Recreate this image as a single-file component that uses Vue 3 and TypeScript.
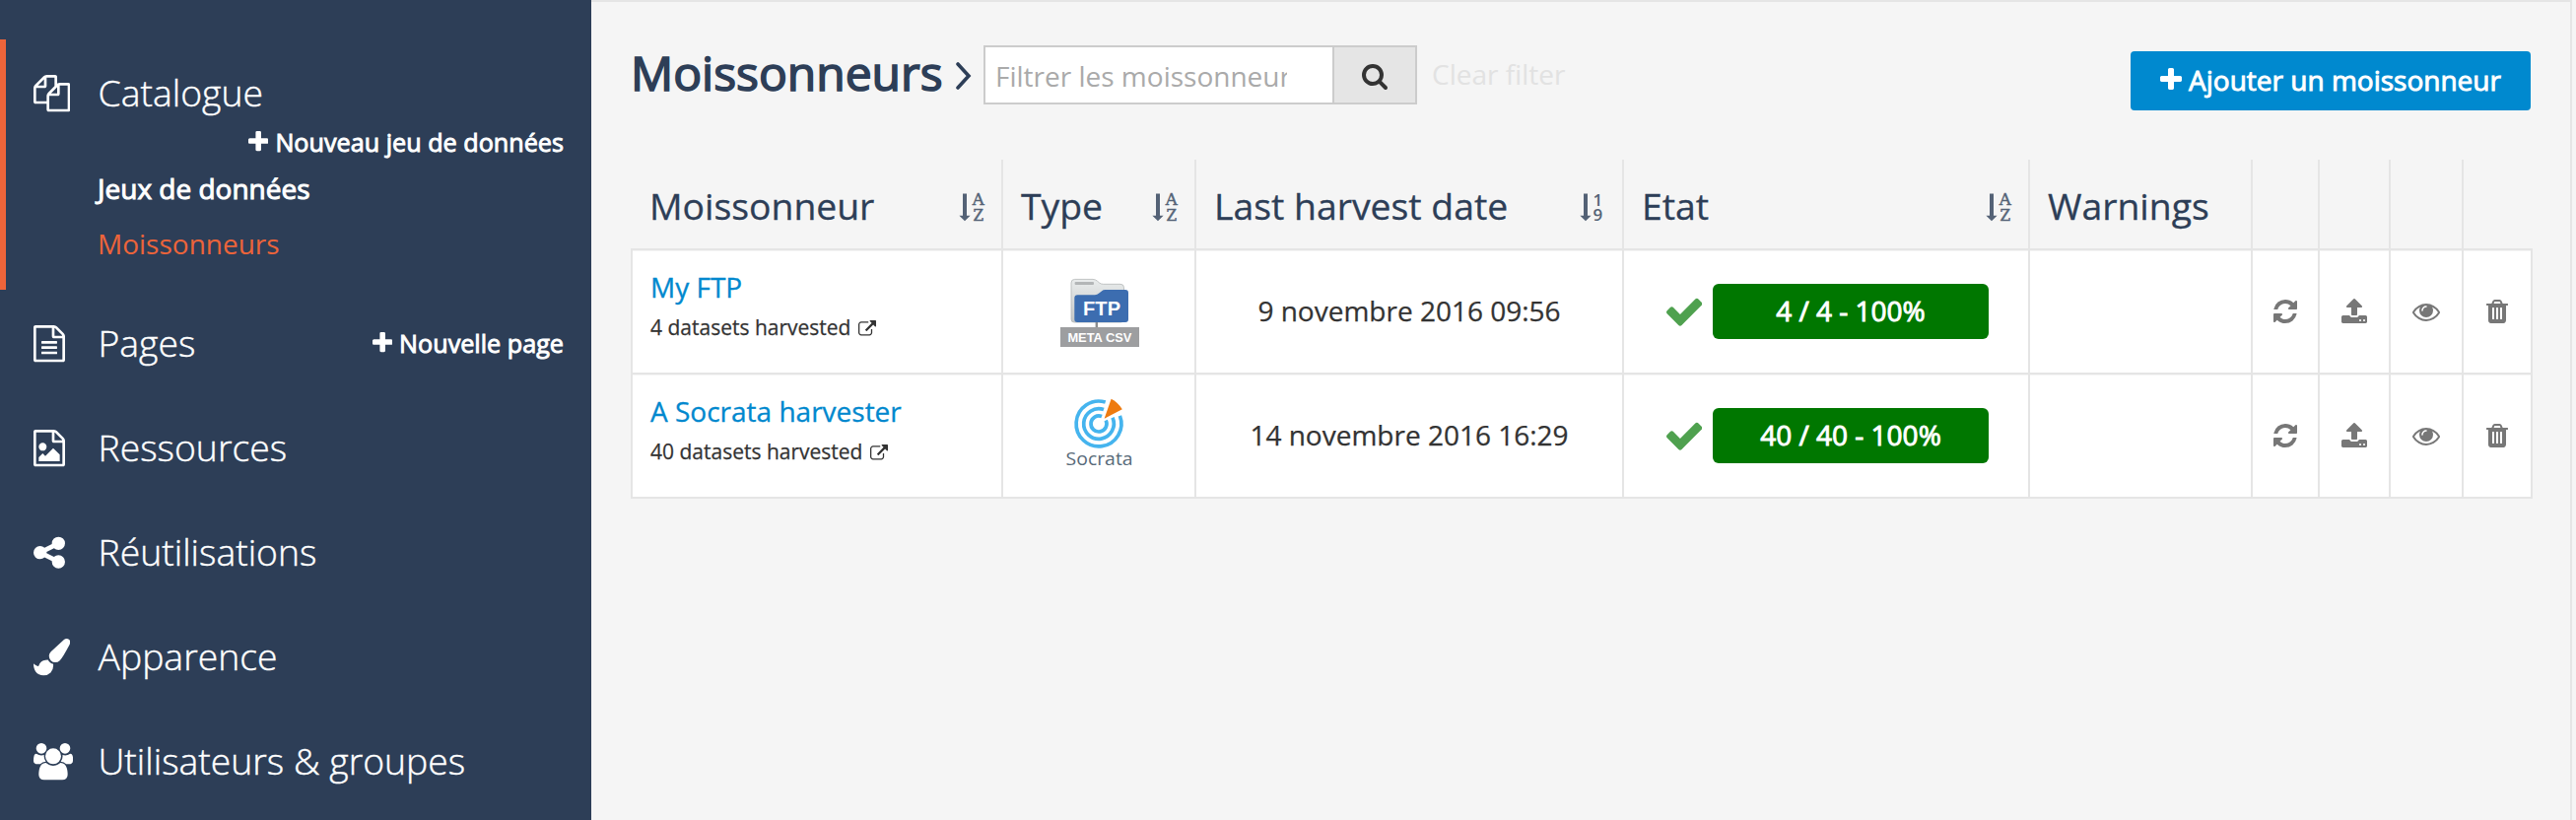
<script setup lang="ts">
interface Glyph { box: string; w: number; h: number; d: string }
interface NavItem { label: string; icon: string; action?: string; cls: string }
interface Harvester { name: string; count: number; kind: 'ftp' | 'socrata'; date: string; state: string }

const plusD = 'M1600 736v192q0 40-28 68t-68 28h-416v416q0 40-28 68t-68 28h-192q-40 0-68-28t-28-68v-416h-416q-40 0-68-28t-28-68v-192q0-40 28-68t68-28h416v-416q0-40 28-68t68-28h192q40 0 68 28t28 68v416h416q40 0 68 28t28 68z'
const pageD = 'M1596 380q28 28 48 76t20 88v1152q0 40-28 68t-68 28h-1344q-40 0-68-28t-28-68v-1600q0-40 28-68t68-28h896q40 0 88 20t76 48zm-444-244v376h376q-10-29-22-41l-313-313q-12-12-41-22zm384 1528v-1024h-416q-40 0-68-28t-28-68v-416h-768v1536h1280z'
const trashBar = 'v-704q0-14-9-23t-23-9h-64q-14 0-23 9t-9 23v704q0 14 9 23t23 9h64q14 0 23-9t9-23z'

const glyphs: Record<string, Glyph> = {
  plus: { box: '192 0 1408 1792', w: 1408, h: 1792, d: plusD },
  search: { box: '64 0 1664 1792', w: 1664, h: 1792, d: 'M1216 832q0-185-131.5-316.5t-316.5-131.5-316.5 131.5-131.5 316.5 131.5 316.5 316.5 131.5 316.5-131.5 131.5-316.5zm512 832q0 52-38 90t-90 38q-54 0-90-38l-343-342q-179 124-399 124-143 0-273.5-55.5t-225-150-150-225-55.5-273.5 55.5-273.5 150-225 225-150 273.5-55.5 273.5 55.5 225 150 150 225 55.5 273.5q0 220-124 399l343 343q37 37 37 90z' },
  files: { box: '0 0 1792 1792', w: 1792, h: 1792, d: 'M1696 384q40 0 68 28t28 68v1216q0 40-28 68t-68 28h-960q-40 0-68-28t-28-68v-288h-544q-40 0-68-28t-28-68v-672q0-40 20-88t48-76l408-408q28-28 76-48t88-20h416q40 0 68 28t28 68v328q68-40 128-40h416zm-544 213l-299 299h299v-299zm-640-384l-299 299h299v-299zm196 647l316-316v-416h-384v416q0 40-28 68t-68 28h-416v640h512v-256q0-40 20-88t48-76zm956 804v-1152h-384v416q0 40-28 68t-68 28h-416v640h896z' },
  page: { box: '128 0 1536 1792', w: 1536, h: 1792, d: pageD + 'M512 800q0-14 9-23t23-9h704q14 0 23 9t9 23v64q0 14-9 23t-23 9h-704q-14 0-23-9t-9-23v-64zm736 224q14 0 23 9t9 23v64q0 14-9 23t-23 9h-704q-14 0-23-9t-9-23v-64q0-14 9-23t23-9h704zm0 256q14 0 23 9t9 23v64q0 14-9 23t-23 9h-704q-14 0-23-9t-9-23v-64q0-14 9-23t23-9h704z' },
  image: { box: '128 0 1536 1792', w: 1536, h: 1792, d: pageD + 'M1408 1216v320h-1024v-192l192-192 128 128 384-384zm-832-192q-80 0-136-56t-56-136 56-136 136-56 136 56 56 136-56 136-136 56z' },
  share: { box: '128 0 1536 1792', w: 1536, h: 1792, d: 'M1344 1024q133 0 226.5 93.5t93.5 226.5-93.5 226.5-226.5 93.5-226.5-93.5-93.5-226.5q0-12 2-34l-360-180q-92 86-218 86-133 0-226.5-93.5t-93.5-226.5 93.5-226.5 226.5-93.5q126 0 218 86l360-180q-2-22-2-34 0-133 93.5-226.5t226.5-93.5 226.5 93.5 93.5 226.5-93.5 226.5-226.5 93.5q-126 0-218-86l-360 180q2 22 2 34t-2 34l360 180q92-86 218-86z' },
  brush: { box: '0 0 1792 1792', w: 1792, h: 1792, d: 'M1615 0q70 0 122.5 46.5t52.5 116.5q0 63-45 151-332 629-465 752-97 91-218 91-126 0-216.5-92.5t-90.5-219.5q0-128 92-212l638-579q59-54 130-54zm-909 1034q39 76 106.5 130t150.5 76l1 71q4 213-129.5 347t-348.5 134q-123 0-218-46.5t-152.5-127.5-86.5-183-29-220q7 5 41 30t62 44.5 59 36.5 46 17q41 0 55-37 25-66 57.5-112.5t69.5-76 88-47.5 103-25.5 125-10.5z' },
  users: { box: '0 0 1920 1792', w: 1920, h: 1792, d: 'M593 896q-162 5-265 128h-134q-82 0-138-40.5t-56-118.5q0-353 124-353 6 0 43.5 21t97.5 42.5 119 21.5q67 0 133-23-5 37-5 66 0 159 93 256zm1071 637q0 120-73 189.5t-194 69.5h-874q-121 0-194-69.5t-73-189.5q0-53 3.5-103.5t14-109 26.5-108.5 43-97.5 62-81 85.5-53.5 111.5-20q10 0 43 21.5t73 48 107 48 135 21.5 135-21.5 107-48 73-48 43-21.5q61 0 111.5 20t85.5 53.5 62 81 43 97.5 26.5 108.5 14 109 3.5 103.5zm-1024-1277q0 106-75 181t-181 75-181-75-75-181 75-181 181-75 181 75 75 181zm704 384q0 159-112.5 271.5t-271.5 112.5-271.5-112.5-112.5-271.5 112.5-271.5 271.5-112.5 271.5 112.5 112.5 271.5zm576 225q0 78-56 118.5t-138 40.5h-134q-103-123-265-128 93-97 93-256 0-29-5-66 66 23 133 23 59 0 119-21.5t97.5-42.5 43.5-21q124 0 124 353zm-128-609q0 106-75 181t-181 75-181-75-75-181 75-181 181-75 181 75 75 181z' },
  refresh: { box: '128 0 1536 1792', w: 1536, h: 1792, d: 'M1639 1056q0 5-1 7-64 268-268 434.5t-478 166.5q-146 0-282.5-55t-243.5-157l-129 129q-19 19-45 19t-45-19-19-45v-448q0-26 19-45t45-19h448q26 0 45 19t19 45-19 45l-137 137q71 66 161 102t187 36q134 0 250-65t186-179q11-17 53-117 8-23 30-23h192q13 0 22.5 9.5t9.5 22.5zm25-800v448q0 26-19 45t-45 19h-448q-26 0-45-19t-19-45 19-45l138-138q-148-137-349-137-134 0-250 65t-186 179q-11 17-53 117-8 23-30 23h-199q-13 0-22.5-9.5t-9.5-22.5v-7q65-268 270-434.5t480-166.5q146 0 284 55.5t245 156.5l130-129q19-19 45-19t45 19 19 45z' },
  upload: { box: '64 0 1664 1792', w: 1664, h: 1792, d: 'M1344 1472q0-26-19-45t-45-19-45 19-19 45 19 45 45 19 45-19 19-45zm256 0q0-26-19-45t-45-19-45 19-19 45 19 45 45 19 45-19 19-45zm128-224v320q0 40-28 68t-68 28h-1472q-40 0-68-28t-28-68v-320q0-40 28-68t68-28h427q21 56 70.5 92t110.5 36h256q61 0 110.5-36t70.5-92h427q40 0 68 28t28 68zm-325-648q-17 40-59 40h-256v448q0 26-19 45t-45 19h-256q-26 0-45-19t-19-45v-448h-256q-42 0-59-40-17-39 14-69l448-448q18-19 45-19t45 19l448 448q31 30 14 69z' },
  eye: { box: '0 0 1792 1792', w: 1792, h: 1792, d: 'M1664 960q-152-236-381-353 61 104 61 225 0 185-131.5 316.5t-316.5 131.5-316.5-131.5-131.5-316.5q0-121 61-225-229 117-381 353 133 205 333.5 326.5t434.5 121.5 434.5-121.5 333.5-326.5zm-720-384q0-20-14-34t-34-14q-125 0-214.5 89.5t-89.5 214.5q0 20 14 34t34 14 34-14 14-34q0-86 61-147t147-61q20 0 34-14t14-34zm848 384q0 34-20 69-140 230-376.5 368.5t-499.5 138.5-499.5-139-376.5-368q-20-35-20-69t20-69q140-229 376.5-368t499.5-139 499.5 139 376.5 368q20 35 20 69z' },
  trash: { box: '192 0 1408 1792', w: 1408, h: 1792, d: `M704 1376${trashBar}M960 1376${trashBar}M1216 1376${trashBar}` + 'M672 384h448l-48-117q-7-9-17-11h-317q-10 2-17 11zm928 32v64q0 14-9 23t-23 9h-96v948q0 83-47 143.5t-113 60.5h-832q-66 0-113-58.5t-47-141.5v-952h-96q-14 0-23-9t-9-23v-64q0-14 9-23t23-9h309l70-167q15-37 54-63t79-26h320q40 0 79 26t54 63l70 167h309q14 0 23 9t9 23z' },
  check: { box: '121 0 1550 1792', w: 1550, h: 1792, d: 'M1671 566q0 40-28 68l-724 724-136 136q-28 28-68 28t-68-28l-136-136-362-362q-28-28-28-68t28-68l136-136q28-28 68-28t68 28l294 295 656-657q28-28 68-28t68 28l136 136q28 28 28 68z' },
  external: { box: '0 0 1792 1792', w: 1792, h: 1792, d: 'M1408 928v320q0 119-84.5 203.5t-203.5 84.5h-832q-119 0-203.5-84.5t-84.5-203.5v-832q0-119 84.5-203.5t203.5-84.5h704q14 0 23 9t9 23v64q0 14-9 23t-23 9h-704q-66 0-113 47t-47 113v832q0 66 47 113t113 47h832q66 0 113-47t47-113v-320q0-14 9-23t23-9h64q14 0 23 9t9 23zm384-864v512q0 26-19 45t-45 19-45-19l-176-176-652 652q-10 10-23 10t-23-10l-114-114q-10-10-10-23t10-23l652-652-176-176q-19-19-19-45t19-45 45-19h512q26 0 45 19t19 45z' },
}

const nav: NavItem[] = [
  { label: 'Pages', icon: 'page', action: 'Nouvelle page', cls: 'n-pages' },
  { label: 'Ressources', icon: 'image', cls: 'n-res' },
  { label: 'Réutilisations', icon: 'share', cls: 'n-reu' },
  { label: 'Apparence', icon: 'brush', cls: 'n-app' },
  { label: 'Utilisateurs & groupes', icon: 'users', cls: 'n-usr' },
]

const columns: { label: string; sort?: [string, string] }[] = [
  { label: 'Moissonneur', sort: ['A', 'Z'] },
  { label: 'Type', sort: ['A', 'Z'] },
  { label: 'Last harvest date', sort: ['1', '9'] },
  { label: 'Etat', sort: ['A', 'Z'] },
  { label: 'Warnings' },
  { label: '' }, { label: '' }, { label: '' }, { label: '' },
]

const harvesters: Harvester[] = [
  { name: 'My FTP', count: 4, kind: 'ftp', date: '9 novembre 2016 09:56', state: '4 / 4 - 100%' },
  { name: 'A Socrata harvester', count: 40, kind: 'socrata', date: '14 novembre 2016 16:29', state: '40 / 40 - 100%' },
]

const actions = ['refresh', 'upload', 'eye', 'trash']

/* Open ring around (39, 28); the gap faces the upper right. */
function ring(r: number, from: number, to: number): string {
  const at = (deg: number) => {
    const a = (deg * Math.PI) / 180
    return `${(39 + r * Math.sin(a)).toFixed(2)} ${(28 - r * Math.cos(a)).toFixed(2)}`
  }
  return `M${at(from)}A${r} ${r} 0 1 1 ${at(to)}`
}
const rings = [ring(22.9, 69, 377), ring(15.3, 66, 379), ring(8, 64, 382)]
</script>

<template>
  <div class="screen">
    <aside class="sidebar">
      <section class="active-block">
        <div class="nav-head">
          <svg class="nav-icon" :viewBox="glyphs.files.box"><path :d="glyphs.files.d" /></svg>
          <span class="nav-label n-cat">Catalogue</span>
        </div>
        <div class="new-line">
          <svg class="mini-plus" :viewBox="glyphs.plus.box"><path :d="glyphs.plus.d" /></svg>
          <span class="new-text new-data">Nouveau jeu de données</span>
        </div>
        <div class="sub sub-data"><span>Jeux de données</span></div>
        <div class="sub sub-on"><span>Moissonneurs</span></div>
      </section>
      <div v-for="item in nav" :key="item.label" class="nav-row">
        <svg class="nav-icon" :viewBox="glyphs[item.icon].box"><path :d="glyphs[item.icon].d" /></svg>
        <span class="nav-label" :class="item.cls">{{ item.label }}</span>
        <div v-if="item.action" class="new-line side">
          <svg class="mini-plus" :viewBox="glyphs.plus.box"><path :d="glyphs.plus.d" /></svg>
          <span class="new-text new-page">{{ item.action }}</span>
        </div>
      </div>
    </aside>

    <main class="panel">
      <header class="topbar">
        <h1>Moissonneurs</h1>
        <svg class="angle" viewBox="0 0 16 28"><path d="M2 2L13 14L2 26" /></svg>
        <div class="filter">
          <div class="field"><span>Filtrer les moissonneurs</span></div>
          <div class="go"><svg :viewBox="glyphs.search.box"><path :d="glyphs.search.d" /></svg></div>
        </div>
        <span class="clear">Clear filter</span>
        <div class="add">
          <svg :viewBox="glyphs.plus.box"><path :d="glyphs.plus.d" /></svg>
          <span>Ajouter un moissonneur</span>
        </div>
      </header>

      <div class="table">
        <div class="tr head">
          <div v-for="(c, i) in columns" :key="i" class="th">
            <span :class="'h' + i">{{ c.label }}</span>
            <svg v-if="c.sort" class="sort" viewBox="0 0 26 28">
              <path d="M4 0.5h4v22.3h3.6L6 28.2L0.4 22.8H4z" />
              <template v-if="c.sort[0] === 'A'">
                <text class="serif" x="13.8" y="12.4" textLength="12" lengthAdjust="spacingAndGlyphs">A</text>
                <text class="serif" x="14.4" y="28" textLength="10.6" lengthAdjust="spacingAndGlyphs">Z</text>
              </template>
              <template v-else>
                <text class="digit" x="13.6" y="12.6">1</text>
                <text class="digit" x="13.6" y="28">9</text>
              </template>
            </svg>
          </div>
        </div>
        <div v-for="h in harvesters" :key="h.name" class="tr body">
          <div class="td name">
            <a :class="'link-' + h.kind">{{ h.name }}</a>
            <div class="count">
              <span>{{ h.count }} datasets harvested</span>
              <svg :viewBox="glyphs.external.box"><path :d="glyphs.external.d" /></svg>
            </div>
          </div>
          <div class="td kind">
            <svg v-if="h.kind === 'ftp'" class="logo" viewBox="0 0 80 80">
              <defs>
                <linearGradient id="folder" x1="0" y1="0" x2="0" y2="1">
                  <stop offset="0" stop-color="#e9ecec" />
                  <stop offset="1" stop-color="#c3c6c6" />
                </linearGradient>
              </defs>
              <path d="M11 48V11q0-3.6 3.6-3.6H33q2.5 0 4.5 1.8l2 1.7q1.8 1.4 4 1.4H61q3.5 0 3.5 3.5V48q0 3-3 3H14q-3 0-3-3z" fill="url(#folder)" stroke="#b4b8b8" stroke-width=".8" />
              <rect x="14.6" y="10" width="19.4" height="3" rx="1" fill="#b3b6b7" />
              <rect x="35.6" y="50" width="2.4" height="7" fill="#8b8d8e" />
              <path d="M14.3 26.4q0-3.2 3.2-3.2H35q2.4 0 4.2-1.6l2.6-2.2q1.6-1.4 3.8-1.4H66q3 0 3 3.2V48q0 3-3 3H17.3q-3 0-3-3z" fill="#3c6db0" />
              <text x="23" y="44.4" class="ftp" textLength="38">FTP</text>
              <rect x="0" y="56" width="80" height="20" fill="#9d9ea0" />
              <text x="7.4" y="71.3" class="meta" textLength="65" lengthAdjust="spacingAndGlyphs">META CSV</text>
            </svg>
            <svg v-else class="logo" viewBox="0 0 80 80">
              <path v-for="r in rings" :key="r" :d="r" fill="none" stroke="#45b4ee" stroke-width="3.7" />
              <path d="M44.6 22.8L51.6 2.8Q58 6 62.8 13.2z" fill="#ee7b10" />
              <text x="5.6" y="69.7" class="soc" textLength="68" lengthAdjust="spacingAndGlyphs">Socrata</text>
            </svg>
          </div>
          <div class="td date"><span :class="'date-' + h.kind">{{ h.date }}</span></div>
          <div class="td state">
            <svg class="tick" :viewBox="glyphs.check.box"><path :d="glyphs.check.d" /></svg>
            <div class="badge"><span :class="'badge-' + h.kind">{{ h.state }}</span></div>
          </div>
          <div class="td"></div>
          <div v-for="a in actions" :key="a" class="td act">
            <svg :viewBox="glyphs[a].box" :style="{ width: (glyphs[a].w / 64) + 'px' }"><path :d="glyphs[a].d" /></svg>
          </div>
        </div>
      </div>
    </main>
  </div>
</template>

<style>
body { margin: 0; overflow: hidden; }
</style>

<style scoped>
.screen {
  display: flex; width: 2614px; height: 832px; overflow: hidden;
  background: #f5f5f5; color: #333;
  font-family: "Open Sans", "Noto Sans", sans-serif; font-size: 28px;
}
.screen * { box-sizing: border-box; }
span, a { white-space: nowrap; }
svg { flex: none; fill: currentColor; display: block; }

.sidebar { width: 600px; flex: none; background: #2d3e57; color: #fff; padding-top: 40px; }
.active-block { border-left: 6px solid #ed643a; height: 254px; padding-top: 23px; margin-bottom: 2px; }
.active-block .nav-head { margin-left: -6px; }
.nav-head, .nav-row { display: grid; grid-template-columns: 65.5px auto 1fr; align-items: center; padding-left: 34px; }
.nav-head { height: 64px; }
.nav-row { height: 106px; }
.nav-icon { height: 37.33px; width: auto; margin-right: auto; }
.nav-label { font-size: 37.33px; font-weight: 300; line-height: 54px; margin-bottom: 3px; -webkit-text-stroke: .4px currentColor; }
.new-line { display: flex; justify-content: flex-end; align-items: center; height: 34px; gap: 7px; padding-right: 28px; }
.new-line.side { position: relative; top: -1px; }
.mini-plus { height: 26px; width: 20.4px; }
.new-text { font-size: 25.2px; line-height: 34px; -webkit-text-stroke: .9px currentColor; }
.sub { padding-left: 93px; font-size: 28px; }
.sub-data { line-height: 60px; -webkit-text-stroke: 1px currentColor; }
.sub-on { line-height: 52px; color: #ed643a; }

.panel {
  width: 2010px; flex: none; border-top: 2px solid #e5e5e5; border-right: 2px solid #e5e5e5;
  padding-left: 40px;
}
.topbar { display: flex; height: 160px; align-items: flex-start; width: 1928px; }
h1 {
  margin: 39px 0 0; width: 328px; font-size: 48px; line-height: 65px; font-weight: 400; color: #2d3e57;
  white-space: nowrap; -webkit-text-stroke: 1.6px currentColor;
}
.angle { width: 16px; height: 28px; margin: 61px 0 0 2px; fill: none; stroke: #2d3e57; stroke-width: 3.6; stroke-linecap: round; }
.filter { display: flex; width: 440px; height: 60px; margin: 44px 0 0 12px; border: 2px solid #ccc; }
.field { width: 352px; background: #fff; padding: 0 46px 0 10px; color: #aaa; line-height: 59px; }
.field span { display: block; overflow: hidden; }
.go { flex: 1; display: flex; align-items: center; justify-content: center; background: #e5e5e5; border-left: 2px solid #ccc; }
.go svg { width: 26px; height: 28px; margin-top: 2px; }
.clear { margin: 54px 0 0 15px; line-height: 38px; color: #e2e2e2; }
.add {
  margin: 50px 0 0 auto; width: 406px; height: 60px; border-radius: 4px; background: #0089cf; color: #fff;
  display: flex; align-items: center; justify-content: center; gap: 7px; line-height: 56px; padding-bottom: 2px;
}
.add span { -webkit-text-stroke: .9px currentColor; }
.add svg { width: 22px; height: 28px; }

.table { width: 1930px; }
.tr { display: grid; grid-template-columns: 376px 196px 434px 412px 226px 68px 72px 74px 72px; }
.th {
  height: 90px; border-left: 2px solid #e5e5e5; padding: 4px 17.5px 0 18px; color: #2d3e57;
  font-size: 37.33px; line-height: 88px; display: flex; align-items: center; justify-content: space-between;
}
.th span { -webkit-text-stroke: .3px currentColor; }
.th:first-child { border-color: transparent; padding-left: 17px; }
.sort { width: 26px; height: 28px; overflow: visible; opacity: .8; margin-top: 2px; }
.serif { font: 16.8px "DejaVu Serif", serif; stroke: currentColor; stroke-width: .5px; }
.digit { font: 600 17px "Open Sans", sans-serif; }
.td { height: 126px; background: #fff; border-left: 2px solid #e5e5e5; border-top: 2px solid #e5e5e5; box-shadow: inset 0 1px #f5f5f5; }
.td:last-child { border-right: 2px solid #e5e5e5; }
.body:last-child { height: 128px; border-bottom: 2px solid #e5e5e5; }
.name { padding: 17px 0 0 18px; display: flex; flex-direction: column; }
.name a { color: #0088ce; line-height: 40px; -webkit-text-stroke: .3px currentColor; }
.count { display: flex; align-items: center; gap: 8px; font-size: 21px; line-height: 40px; margin-top: 1px; }
.count span, .date span { -webkit-text-stroke: .25px currentColor; }
.count svg { width: 18px; height: 18px; margin-top: 3px; }
.kind { display: flex; justify-content: center; padding: 22px 0 0 2px; }
.logo { width: 80px; height: 80px; }
.ftp { font: bold 20px "Liberation Sans", sans-serif; fill: #fff; }
.meta { font: bold 13px "Liberation Sans", sans-serif; fill: #fff; }
.soc { font: 19px "Open Sans", sans-serif; fill: #586a79; }
.date { display: flex; justify-content: center; line-height: 122px; }
.state { display: flex; align-items: flex-start; padding-left: 43px; }
.tick { width: 36.3px; height: 42px; color: #4fa14f; margin-top: 41px; }
.badge {
  margin: 34px 0 0 10.7px; width: 280px; height: 56px; border-radius: 6px; background: #007700; color: #fff;
  display: flex; justify-content: center; line-height: 54px; -webkit-text-stroke: .9px currentColor;
}
.act { display: flex; justify-content: center; align-items: flex-start; padding-top: 48px; color: #777; }
.act svg { height: 28px; }
</style>
